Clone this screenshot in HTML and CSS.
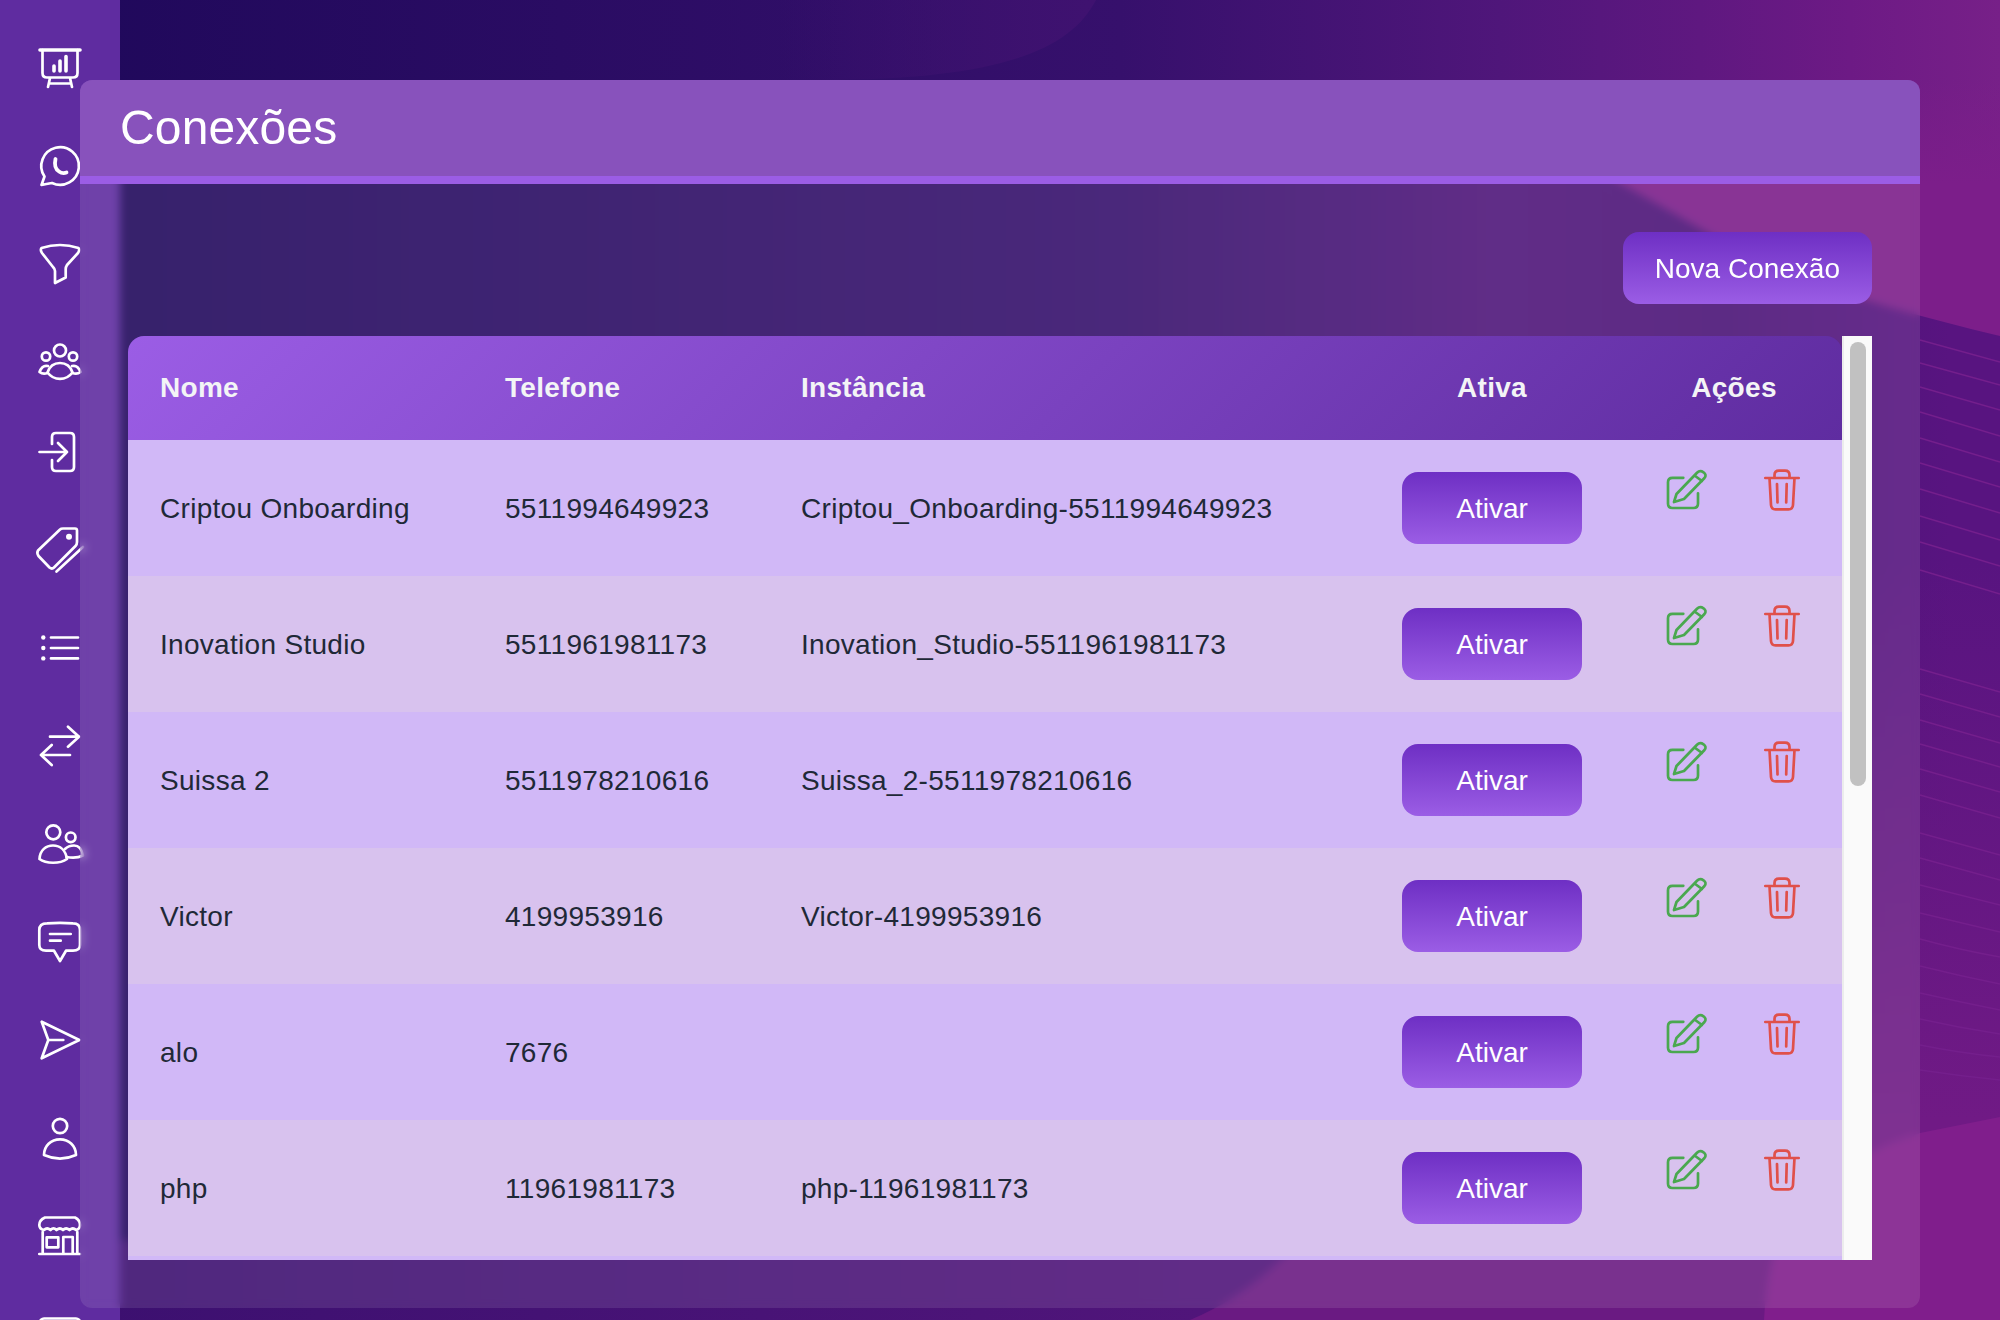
FILE: index.html
```html
<!DOCTYPE html>
<html lang="pt-BR">
<head>
<meta charset="utf-8">
<title>Conexões</title>
<link rel="stylesheet" href="styles.css">
</head>
<body>
<svg class="backdrop" viewBox="0 0 2000 1320" preserveAspectRatio="none" aria-hidden="true">
  <defs>
    <linearGradient id="bgBase" gradientUnits="userSpaceOnUse" x1="0" y1="0" x2="2000" y2="0">
      <stop offset="0" stop-color="#1e085a"/><stop offset=".56" stop-color="#36106c"/>
      <stop offset=".75" stop-color="#4f167a"/><stop offset=".85" stop-color="#5f1880"/>
      <stop offset=".925" stop-color="#6d1a85"/><stop offset="1" stop-color="#772088"/>
    </linearGradient>
    <linearGradient id="bgBottom" gradientUnits="userSpaceOnUse" x1="100" y1="0" x2="1200" y2="0">
      <stop offset="0" stop-color="#3c1070"/><stop offset="1" stop-color="#50157a"/>
    </linearGradient>
    <linearGradient id="bgBlob" gradientUnits="userSpaceOnUse" x1="780" y1="0" x2="1090" y2="0">
      <stop offset="0" stop-color="#3f1270" stop-opacity="0"/><stop offset="1" stop-color="#3f1270"/>
    </linearGradient>
    <linearGradient id="bgPatch" gradientUnits="userSpaceOnUse" x1="0" y1="80" x2="0" y2="184">
      <stop offset="0" stop-color="#7c1e8a" stop-opacity="0"/><stop offset="1" stop-color="#7c1e8a"/>
    </linearGradient>
    <linearGradient id="bgBand" gradientUnits="userSpaceOnUse" x1="1500" y1="0" x2="1950" y2="0">
      <stop offset="0" stop-color="#4f167a"/><stop offset=".5" stop-color="#4a1377"/><stop offset="1" stop-color="#581480"/>
    </linearGradient>
    <linearGradient id="bgBandLight" gradientUnits="userSpaceOnUse" x1="0" y1="560" x2="0" y2="1120">
      <stop offset="0" stop-color="#701a85" stop-opacity="0"/><stop offset="1" stop-color="#701a85"/>
    </linearGradient>
  </defs>
  <rect width="2000" height="1320" fill="url(#bgBase)"/>
  <path d="M780 0H1096C1070 50 1000 80 820 80H780Z" fill="url(#bgBlob)"/>
  <rect x="0" y="1240" width="2000" height="80" fill="url(#bgBottom)"/>
  <path d="M1500 80H2000V340H1500Z" fill="url(#bgPatch)"/>
  <path d="M1500 120C1600 170 1650 200 1720 240C1800 285 1900 312 2000 336V1320H1500Z" fill="url(#bgBand)"/>
  <rect x="1860" y="560" width="140" height="600" fill="url(#bgBandLight)"/>
  <path d="M1190 1320Q1250 1295 1300 1240H2000V1320Z" fill="#6a1a82"/>
  <path d="M1764 1320Q1768 1240 1800 1200Q1860 1150 1920 1133L2000 1117V1320Z" fill="#801e8c"/>
  <path class="bg-lines" d="M1920 340L2000 362M1920 363L2000 385M1920 387L2000 410M1920 412L2000 436M1920 438L2000 462M1920 463L2000 487M1920 489L2000 513M1920 516L2000 540M1920 542L2000 566M1920 570L2000 594M1920 669L2000 692M1920 694L2000 717M1920 720L2000 743M1920 744L2000 767M1920 769L2000 792M1920 795L2000 818M1920 833L2000 855M1920 858L2000 880M1920 885L2000 905M1920 913L2000 932M1920 939Q1960 950 2000 957M1920 966Q1960 976 2000 984M1920 993Q1960 1002 2000 1010M1920 1019Q1960 1028 2000 1034M1920 1045Q1960 1053 2000 1057M1920 1070Q1960 1076 2000 1080"/>
</svg>

<aside class="sidebar">
  <svg class="nav-icon" viewBox="0 0 48 48"><path class="thick" d="M4 6H44"/><path d="M6.5 6V29Q6.5 33.5 11 33.5H37Q41.5 33.5 41.5 29V6M14 34L12 43M34 34L36 43M13 39.5H35"/><path class="thick" d="M18 27V22M24 27V17M30 27V12.5"/></svg>
  <svg class="nav-icon" viewBox="0 0 48 48"><path d="M5.5 43L8.5 34.5A18.8 18.8 0 1 1 16 41Q10 42 5.5 43Z"/><path class="phone" d="M19.5 17Q17.5 26 23 29.5Q26.5 32 30.5 30.5"/></svg>
  <svg class="nav-icon" viewBox="0 0 48 48"><path d="M5.5 8Q24 2 42.5 8Q44 10 42 13L31 25Q29.7 27 29.7 29V37.5L19 43V31Q19 29 17 27L6 13Q4 10 5.5 8Z"/></svg>
  <svg class="nav-icon" viewBox="0 0 48 48"><circle cx="24" cy="12.5" r="6"/><circle cx="10" cy="18.5" r="4.2"/><circle cx="37" cy="18.5" r="4.2"/><path d="M11.5 34.5C14 27 19 25 24 25C29 25 34 27 36.5 34.5C30 43 18 43 11.5 34.5Z"/><path d="M12 28C8 27 5 30 3.5 34C6 36 9 36 11.5 35M36 28C40 27 43 30 44.5 34C42 36 39 36 36.5 35"/></svg>
  <svg class="nav-icon nav-tight" viewBox="0 0 48 48"><path d="M16 16V9Q16 5 20 5H34Q38 5 38 9V39Q38 43 34 43H20Q16 43 16 39V32M3.5 24H31M22 15L31 24L22 33"/></svg>
  <svg class="nav-icon" viewBox="0 0 48 48"><path d="M2 24.5L24 3.5Q25 2.5 27 2.5H39Q41 2.5 41 4.5V16Q41 18.5 39.5 20L18 41.5Q16 43.5 13.5 41.5L2.5 30Q.5 27 2 24.5Z"/><circle class="solid" cx="33" cy="10.7" r="3"/><path d="M20.5 45.5L47 21"/></svg>
  <svg class="nav-icon" viewBox="0 0 48 48"><circle class="solid" cx="7.3" cy="13.5" r="2.2"/><circle class="solid" cx="7.3" cy="24" r="2.2"/><circle class="solid" cx="7.3" cy="34.4" r="2.2"/><path d="M15 13.5H42M15 24H42M15 34.4H42"/></svg>
  <svg class="nav-icon" viewBox="0 0 48 48"><path d="M14 14.7H43M32 4.7L43 14.7L32 24.7M34 33H5M15.7 23L5 33L15.7 43"/></svg>
  <svg class="nav-icon" viewBox="0 0 48 48"><circle cx="17.3" cy="12.3" r="7"/><circle cx="34.7" cy="17.3" r="4.8"/><path d="M3.5 39C4 30 10 25.5 17 25.5C24 25.5 29.5 30 31 39C24 44 10 44 3.5 39Z"/><path d="M29 29C32 26 36 25.5 38 25.5C43 25.5 46 30 47 35.5C42 38 36 38 30.5 37"/></svg>
  <svg class="nav-icon" viewBox="0 0 48 48"><path d="M11 5.3Q24 4.5 37 5.3Q44 5.3 44 12V27Q44 32.7 37 32.7H30L24 43L18 32.7H10Q3.3 32.7 3.3 27V12Q3.3 5.3 11 5.3Z"/><path d="M14 16H34.7M14 22.7H24.7"/></svg>
  <svg class="nav-icon" viewBox="0 0 48 48"><path d="M5.7 5.7L43.3 24L5.7 42.3L12.3 24Z"/><path d="M12.3 24H27.3"/></svg>
  <svg class="nav-icon" viewBox="0 0 48 48"><circle cx="24" cy="12" r="7.2"/><path d="M8 41C8 32 15 25.3 24 25.3C33 25.3 40 32 40 41C30 45.5 18 45.5 8 41Z"/></svg>
  <svg class="nav-icon" viewBox="0 0 48 48"><path d="M9 5.5H39Q44 8 44 13Q44 17 40 18Q37 15 33.5 18Q30 15 27 18Q24 15 20.5 18Q17.5 15 14.5 18Q11 15 8 18Q3.3 17 3.3 13Q3.3 8 9 5.5Z"/><path d="M6.7 20V42M41.3 20V42M3.3 42H44M27.3 42V25H36.7V42"/><rect x="10.7" y="25.3" width="11.6" height="10"/></svg>
  <svg class="nav-icon" viewBox="0 0 48 48"><rect x="4" y="8.5" width="40" height="32" rx="4"/></svg>
</aside>

<svg class="sprites" aria-hidden="true">
  <symbol id="i-edit" viewBox="0 0 48 48"><path d="M20.3 12.8H9.5Q5 12.8 5 17.3V38.5Q5 43 9.5 43H30.5Q35 43 35 38.5V28.3M11 37L13.5 29L34 7.8Q37 4.8 40.5 7.3Q44 10 41.5 13L21 34ZM31.5 10.5L39 16"/></symbol>
  <symbol id="i-trash" viewBox="0 0 48 48"><path d="M7.3 13H40.7M11.5 13L13 40Q13.3 44.4 17.5 44.4H30.5Q34.7 44.4 35 40L36.5 13M16.5 12.5V10Q16.5 5.6 21 5.6H27Q31.5 5.6 31.5 10V12.5M19 19L19.5 37.5M28.7 19L28.2 37.5"/></symbol>
</svg>

<main class="main">
  <section class="panel">
    <header class="panel-head"><h1 class="panel-title">Conexões</h1></header>
    <div class="panel-body">
      <div class="toolbar"><button class="btn" type="button">Nova Conexão</button></div>
      <div class="table-wrap">
        <div class="scroller">
          <table class="grid">
            <colgroup><col class="c-name"><col class="c-phone"><col class="c-inst"><col class="c-active"><col class="c-actions"></colgroup>
            <thead>
              <tr><th>Nome</th><th>Telefone</th><th>Instância</th><th class="center">Ativa</th><th class="center">Ações</th></tr>
            </thead>
            <tbody>
              <tr><td>Criptou Onboarding</td><td>5511994649923</td><td>Criptou_Onboarding-5511994649923</td><td class="center"><button class="btn" type="button">Ativar</button></td><td class="actions"><div class="action-set"><svg class="act edit"><use href="#i-edit"/></svg><svg class="act trash"><use href="#i-trash"/></svg></div></td></tr>
              <tr><td>Inovation Studio</td><td>5511961981173</td><td>Inovation_Studio-5511961981173</td><td class="center"><button class="btn" type="button">Ativar</button></td><td class="actions"><div class="action-set"><svg class="act edit"><use href="#i-edit"/></svg><svg class="act trash"><use href="#i-trash"/></svg></div></td></tr>
              <tr><td>Suissa 2</td><td>5511978210616</td><td>Suissa_2-5511978210616</td><td class="center"><button class="btn" type="button">Ativar</button></td><td class="actions"><div class="action-set"><svg class="act edit"><use href="#i-edit"/></svg><svg class="act trash"><use href="#i-trash"/></svg></div></td></tr>
              <tr><td>Victor</td><td>4199953916</td><td>Victor-4199953916</td><td class="center"><button class="btn" type="button">Ativar</button></td><td class="actions"><div class="action-set"><svg class="act edit"><use href="#i-edit"/></svg><svg class="act trash"><use href="#i-trash"/></svg></div></td></tr>
              <tr><td>alo</td><td>7676</td><td></td><td class="center"><button class="btn" type="button">Ativar</button></td><td class="actions"><div class="action-set"><svg class="act edit"><use href="#i-edit"/></svg><svg class="act trash"><use href="#i-trash"/></svg></div></td></tr>
              <tr><td>php</td><td>11961981173</td><td>php-11961981173</td><td class="center"><button class="btn" type="button">Ativar</button></td><td class="actions"><div class="action-set"><svg class="act edit"><use href="#i-edit"/></svg><svg class="act trash"><use href="#i-trash"/></svg></div></td></tr>
              <tr><td colspan="5"></td></tr>
            </tbody>
          </table>
        </div>
        <div class="scroll-track"><div class="scroll-thumb"></div></div>
      </div>
    </div>
  </section>
</main>
</body>
</html>
```
FILE: styles.css
```css
* { box-sizing: border-box; }

html, body {
  margin: 0;
  height: 100%;
}

body {
  display: flex;
  overflow: hidden;
  font-family: "Liberation Sans", Arial, sans-serif;
  color: #1f2937;
  background: #1e085a;
}

.backdrop {
  position: fixed;
  inset: 0;
  width: 100%;
  height: 100%;
  z-index: -1;
}

.bg-lines {
  fill: none;
  stroke: #741f8c;
  stroke-width: 1.5;
}

.sprites {
  position: absolute;
  width: 0;
  height: 0;
}

.sidebar {
  flex: 0 0 120px;
  height: 1320px;
  overflow: hidden;
  display: flex;
  flex-direction: column;
  align-items: center;
  gap: 50px;
  padding-top: 44px;
  background: #5f2ca0;
}

.nav-icon {
  flex: none;
  width: 48px;
  height: 48px;
  overflow: visible;
  fill: none;
  stroke: #fff;
  stroke-width: 2.7;
  stroke-linecap: round;
  stroke-linejoin: round;
}

.nav-tight { margin-top: -8px; }
.nav-icon .thick { stroke-width: 3.6; }
.nav-icon .phone { stroke-width: 3.8; }
.nav-icon .solid { fill: #fff; stroke: none; }

.main {
  flex: 1;
  min-width: 0;
  height: 1320px;
  display: flex;
  margin-left: -40px;
  padding: 80px 80px 12px 0;
}

.panel {
  flex: 1;
  min-width: 0;
  display: flex;
  flex-direction: column;
  border-radius: 12px;
  background: rgba(255, 255, 255, .1);
  backdrop-filter: blur(4px);
}

.panel-head {
  flex: none;
  height: 104px;
  padding-left: 40px;
  display: flex;
  align-items: center;
  border-bottom: 8px solid #9b5de5;
  border-radius: 12px 12px 0 0;
  background: #8852bc;
}

.panel-title {
  margin: 0;
  font-size: 48px;
  font-weight: 400;
  line-height: 56px;
  letter-spacing: .15px;
  color: #fff;
}

.panel-body {
  flex: 1;
  min-height: 0;
  display: flex;
  flex-direction: column;
  gap: 32px;
  padding: 48px;
}

.toolbar {
  flex: none;
  display: flex;
  justify-content: flex-end;
}

.btn {
  height: 72px;
  padding: 1px 32px 0;
  border: 0;
  border-radius: 16px;
  font: 400 28px/40px "Liberation Sans", Arial, sans-serif;
  color: #fff;
  background: linear-gradient(180deg, #6e2fc4, #9b5de5);
}

td .btn {
  width: 180px;
  padding: 1px 0 0;
  display: block;
  margin: 0 auto;
}

.table-wrap {
  flex: 1;
  min-height: 0;
  display: flex;
}

.scroller {
  flex: 1;
  min-width: 0;
  overflow: hidden;
}

.scroll-track {
  flex: 0 0 30px;
  padding: 6px 6px 6px 6px;
  border-left: 2px solid #ececec;
  background: #fafafa;
}

.scroll-thumb {
  height: 444px;
  border-radius: 8px;
  background: #c1c1c1;
}

.grid {
  width: 1714px;
  table-layout: fixed;
  border-collapse: separate;
  border-spacing: 0;
  border-radius: 16px 16px 0 0;
  overflow: hidden;
  font-size: 28px;
  line-height: 40px;
  letter-spacing: .3px;
}

.c-name { width: 345px; }
.c-phone { width: 296px; }
.c-inst { width: 589px; }
.c-active { width: 268px; }
.c-actions { width: 216px; }

thead { background: linear-gradient(135deg, #9b5de5, #5f2ca0); }

th {
  height: 104px;
  padding: 32px;
  text-align: left;
  font-weight: 700;
  color: #f3f4f6;
}

td {
  height: 136px;
  padding: 33px 32px 31px;
  vertical-align: middle;
}

td.center { padding: 32px; }

tbody tr:nth-child(odd) { background: #d1b8f7; }
tbody tr:nth-child(even) { background: #d8c2ee; }

th.center, td.center { text-align: center; }

td.actions {
  padding: 25px 0 0;
  vertical-align: top;
}

.action-set {
  display: flex;
  justify-content: center;
  gap: 47px;
}

.act {
  width: 48px;
  height: 48px;
  fill: none;
  stroke-width: 2.7;
  stroke-linecap: round;
  stroke-linejoin: round;
}

.edit { stroke: #4aa84f; }
.trash { stroke: #e0504a; }
```
